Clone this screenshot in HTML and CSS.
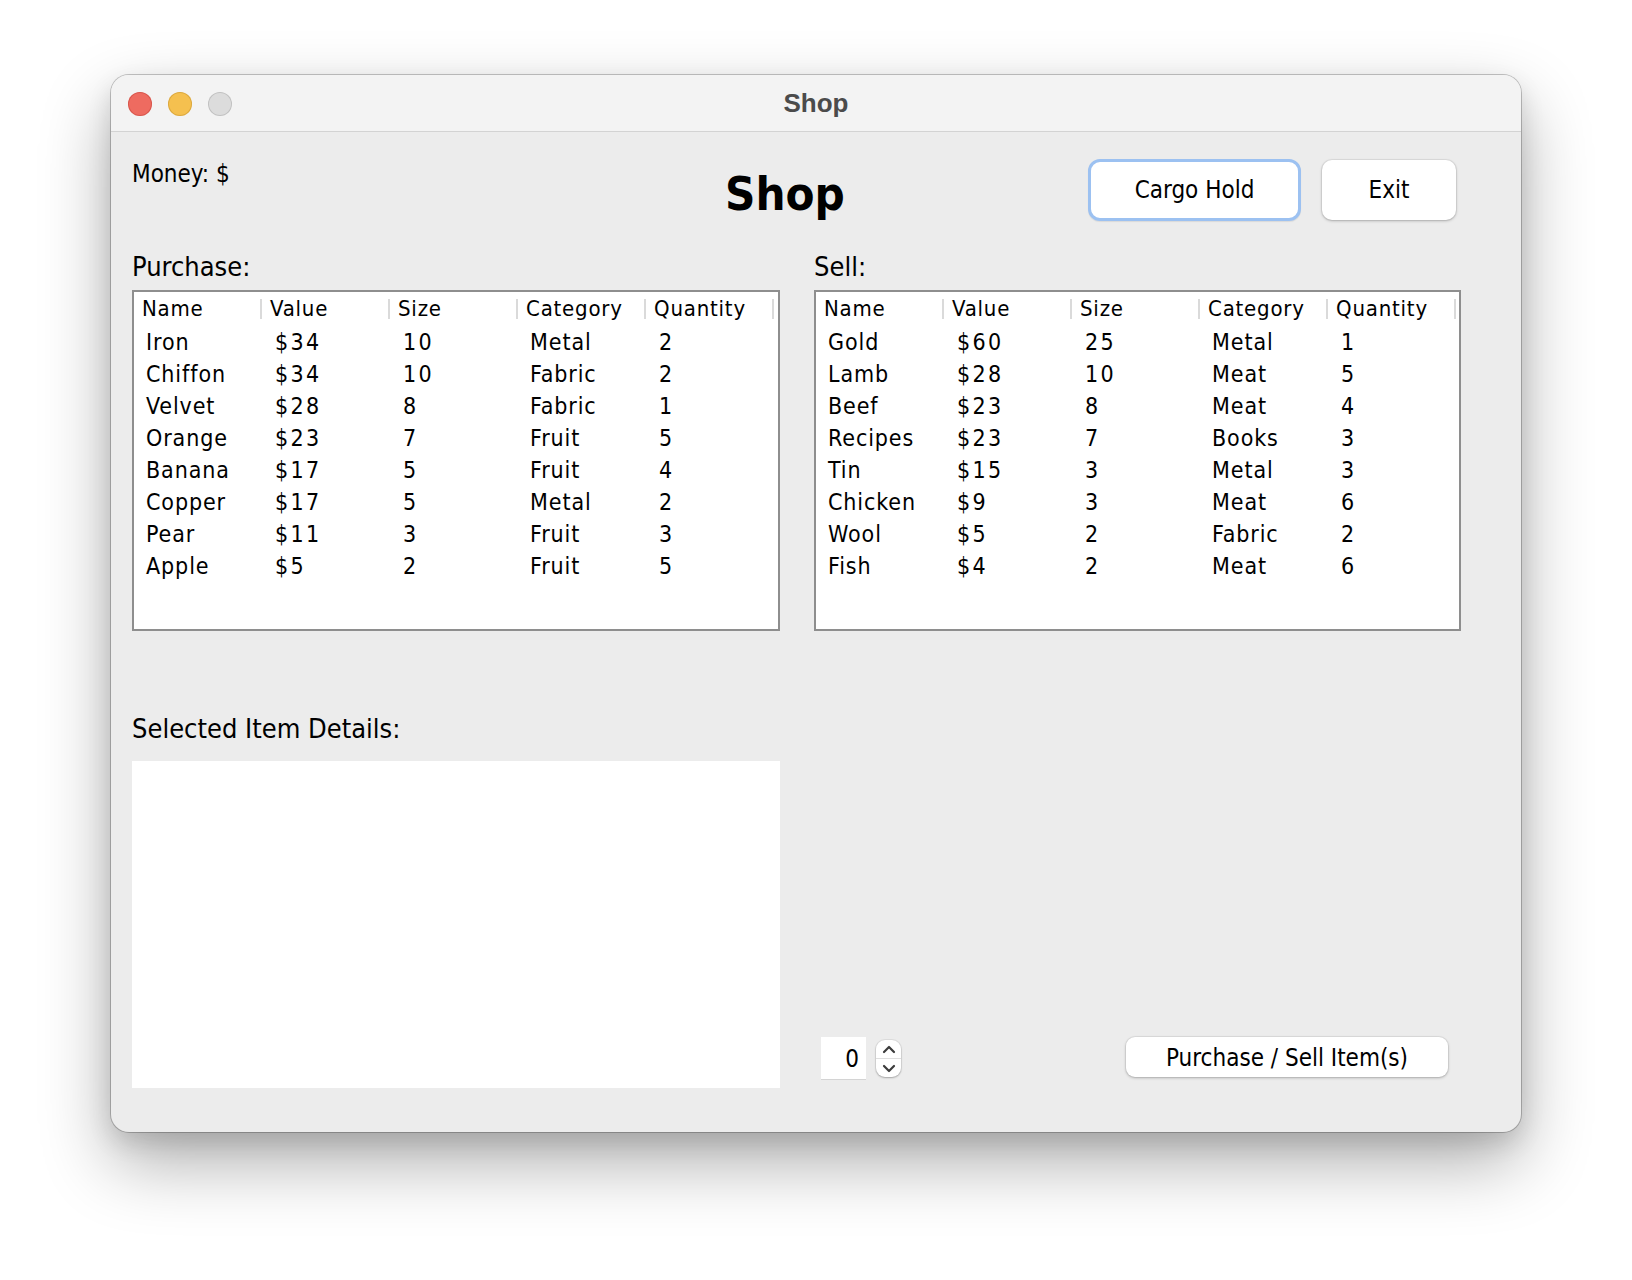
FILE: index.html
```html
<!DOCTYPE html>
<html lang="en">
<head>
<meta charset="utf-8">
<title>Shop</title>
<link rel="stylesheet" href="styles.css">
</head>
<body>
<div class="window">
  <div class="titlebar">
    <div class="lights">
      <span class="light red"></span>
      <span class="light yellow"></span>
      <span class="light gray"></span>
    </div>
    <div class="title">Shop</div>
    <div></div>
  </div>
  <div class="content">
    <div class="top">
      <div class="money">Money: $</div>
      <h1 class="heading">Shop</h1>
      <div class="actions">
        <button class="btn btn-focus">Cargo Hold</button>
        <button class="btn btn-exit">Exit</button>
      </div>
    </div>

    <div class="tables">
      <section class="panel">
        <div class="label">Purchase:</div>
        <div class="table">
          <div class="thead">
            <div class="th"><span class="th-text">Name</span><span class="sep"></span></div>
            <div class="th"><span class="th-text">Value</span><span class="sep"></span></div>
            <div class="th"><span class="th-text">Size</span><span class="sep"></span></div>
            <div class="th"><span class="th-text">Category</span><span class="sep"></span></div>
            <div class="th"><span class="th-text">Quantity</span><span class="sep"></span></div>
          </div>
          <div class="tbody">
            <div class="tr"><span>Iron</span><span class="num">$34</span><span class="num">10</span><span>Metal</span><span class="num">2</span></div>
            <div class="tr"><span>Chiffon</span><span class="num">$34</span><span class="num">10</span><span>Fabric</span><span class="num">2</span></div>
            <div class="tr"><span>Velvet</span><span class="num">$28</span><span class="num">8</span><span>Fabric</span><span class="num">1</span></div>
            <div class="tr"><span>Orange</span><span class="num">$23</span><span class="num">7</span><span>Fruit</span><span class="num">5</span></div>
            <div class="tr"><span>Banana</span><span class="num">$17</span><span class="num">5</span><span>Fruit</span><span class="num">4</span></div>
            <div class="tr"><span>Copper</span><span class="num">$17</span><span class="num">5</span><span>Metal</span><span class="num">2</span></div>
            <div class="tr"><span>Pear</span><span class="num">$11</span><span class="num">3</span><span>Fruit</span><span class="num">3</span></div>
            <div class="tr"><span>Apple</span><span class="num">$5</span><span class="num">2</span><span>Fruit</span><span class="num">5</span></div>
          </div>
        </div>
      </section>
      <section class="panel">
        <div class="label">Sell:</div>
        <div class="table">
          <div class="thead">
            <div class="th"><span class="th-text">Name</span><span class="sep"></span></div>
            <div class="th"><span class="th-text">Value</span><span class="sep"></span></div>
            <div class="th"><span class="th-text">Size</span><span class="sep"></span></div>
            <div class="th"><span class="th-text">Category</span><span class="sep"></span></div>
            <div class="th"><span class="th-text">Quantity</span><span class="sep"></span></div>
          </div>
          <div class="tbody">
            <div class="tr"><span>Gold</span><span class="num">$60</span><span class="num">25</span><span>Metal</span><span class="num">1</span></div>
            <div class="tr"><span>Lamb</span><span class="num">$28</span><span class="num">10</span><span>Meat</span><span class="num">5</span></div>
            <div class="tr"><span>Beef</span><span class="num">$23</span><span class="num">8</span><span>Meat</span><span class="num">4</span></div>
            <div class="tr"><span>Recipes</span><span class="num">$23</span><span class="num">7</span><span>Books</span><span class="num">3</span></div>
            <div class="tr"><span>Tin</span><span class="num">$15</span><span class="num">3</span><span>Metal</span><span class="num">3</span></div>
            <div class="tr"><span>Chicken</span><span class="num">$9</span><span class="num">3</span><span>Meat</span><span class="num">6</span></div>
            <div class="tr"><span>Wool</span><span class="num">$5</span><span class="num">2</span><span>Fabric</span><span class="num">2</span></div>
            <div class="tr"><span>Fish</span><span class="num">$4</span><span class="num">2</span><span>Meat</span><span class="num">6</span></div>
          </div>
        </div>
      </section>
    </div>

    <div class="lower">
      <section class="panel">
        <div class="label">Selected Item Details:</div>
        <div class="details"></div>
      </section>
      <div class="controls">
        <div class="spinner-field">0</div>
        <div class="spinner-arrows">
          <span class="arrow">
            <svg width="14" height="9" viewBox="0 0 14 9"><path d="M2 7 L7 2 L12 7" fill="none" stroke="#3c3c3c" stroke-width="2.2" stroke-linecap="round" stroke-linejoin="round"/></svg>
          </span>
          <span class="arrow arrow-down">
            <svg width="14" height="9" viewBox="0 0 14 9"><path d="M2 2 L7 7 L12 2" fill="none" stroke="#3c3c3c" stroke-width="2.2" stroke-linecap="round" stroke-linejoin="round"/></svg>
          </span>
        </div>
        <button class="btn btn-action">Purchase / Sell Item(s)</button>
      </div>
    </div>
  </div>
</div>
</body>
</html>
```

FILE: styles.css
```css
* {
  box-sizing: border-box;
}

html, body {
  margin: 0;
  padding: 0;
  background: #ffffff;
}

body {
  width: 1632px;
  height: 1280px;
  padding-top: 75px;
  padding-left: 111px;
  font-family: "DejaVu Sans Condensed", "DejaVu Sans", sans-serif;
  font-stretch: semi-condensed;
  color: #000;
}

.window {
  width: 1410px;
  height: 1057px;
  border-radius: 18px;
  background: #ececec;
  overflow: hidden;
  box-shadow: 0 0 0 1px rgba(0, 0, 0, 0.22), 0 30px 70px rgba(0, 0, 0, 0.32), 0 10px 24px rgba(0, 0, 0, 0.12);
}

.titlebar {
  height: 57px;
  background: #f3f3f3;
  border-bottom: 1px solid #d3d3d3;
  display: grid;
  grid-template-columns: 1fr auto 1fr;
  align-items: center;
}

.lights {
  display: flex;
  gap: 16px;
  padding-left: 17px;
  padding-top: 1px;
}

.light {
  width: 24px;
  height: 24px;
  border-radius: 50%;
  display: block;
}

.light.red {
  background: #ee6b60;
  box-shadow: inset 0 0 0 1px rgba(190, 60, 50, 0.45);
}

.light.yellow {
  background: #f5c04f;
  box-shadow: inset 0 0 0 1px rgba(190, 140, 40, 0.45);
}

.light.gray {
  background: #dcdcdc;
  box-shadow: inset 0 0 0 1px rgba(0, 0, 0, 0.12);
}

.title {
  font-family: "Liberation Sans", Arial, sans-serif;
  font-stretch: normal;
  font-weight: 700;
  font-size: 26px;
  line-height: 56px;
  color: #4b4b4b;
}

.content {
  padding: 26px 0 0 21px;
}

/* top row */
.top {
  display: flex;
  align-items: flex-start;
  height: 65px;
}

.money {
  width: 593px;
  margin-top: 1px;
  font-size: 24px;
  line-height: 30px;
}

.heading {
  margin: 8px 0 0 0;
  font-size: 47px;
  line-height: 56px;
  font-weight: 700;
}

.actions {
  margin-left: auto;
  margin-right: 65px;
  display: flex;
  align-items: flex-start;
  gap: 21px;
}

.btn {
  font-family: inherit;
  font-stretch: inherit;
  font-size: 24px;
  color: #000;
  background: #ffffff;
  border: none;
  padding: 0;
  cursor: default;
}

.btn-focus {
  margin-top: 1px;
  width: 213px;
  height: 62px;
  border: 3px solid #9cc1f1;
  border-radius: 12px;
  box-shadow: 0 1px 1px rgba(0, 0, 0, 0.08);
}

.btn-exit {
  margin-top: 2px;
  width: 134px;
  height: 60px;
  border-radius: 10px;
  box-shadow: 0 0 0 1px rgba(0, 0, 0, 0.05), 0 1px 3px rgba(0, 0, 0, 0.25);
}

/* tables */
.tables {
  margin-top: 29px;
  display: grid;
  grid-template-columns: 648px 647px;
  gap: 34px;
}

.label {
  font-size: 27px;
  line-height: 30px;
}

.table {
  margin-top: 8px;
  height: 341px;
  background: #ffffff;
  border: 2px solid #8e8e8e;
}

.thead {
  display: grid;
  grid-template-columns: repeat(5, 128px);
  height: 30px;
  margin-top: 2px;
  align-items: center;
}

.th {
  display: flex;
  align-items: center;
  height: 30px;
  padding-left: 8px;
}

.th-text {
  flex: 1;
  font-size: 22px;
  letter-spacing: 0.8px;
  line-height: 30px;
}

.sep {
  width: 2px;
  height: 20px;
  background: #dadada;
}

.tbody {
  padding-top: 2px;
}

.tr {
  display: grid;
  grid-template-columns: repeat(5, 128px);
  height: 32px;
  font-size: 23px;
  letter-spacing: 0.9px;
  line-height: 32px;
}

.tr span {
  padding-left: 12px;
  white-space: nowrap;
}

.tr .num {
  padding-left: 13px;
  letter-spacing: 2.4px;
}

/* lower area */
.lower {
  margin-top: 83px;
  display: grid;
  grid-template-columns: 648px 647px;
  gap: 34px;
}

.details {
  margin-top: 17px;
  height: 327px;
  background: #ffffff;
}

.controls {
  display: flex;
  align-items: flex-start;
  align-self: end;
  padding-bottom: 8px;
  padding-left: 7px;
  padding-right: 13px;
}

.spinner-field {
  width: 45px;
  height: 43px;
  background: #ffffff;
  border-bottom: 1px solid #d4d4d4;
  font-size: 24px;
  line-height: 44px;
  text-align: right;
  padding-right: 7px;
}

.spinner-arrows {
  margin-left: 10px;
  margin-top: 3px;
  width: 25px;
  height: 37px;
  background: #ffffff;
  border-radius: 9px;
  box-shadow: 0 0 0 1px rgba(0, 0, 0, 0.06), 0 1px 2px rgba(0, 0, 0, 0.25);
  display: flex;
  flex-direction: column;
}

.arrow {
  flex: 1;
  display: flex;
  align-items: center;
  justify-content: center;
}

.arrow-down {
  border-top: 1px solid #dedede;
}

.btn-action {
  margin-left: auto;
  width: 322px;
  height: 40px;
  padding-top: 1px;
  border-radius: 9px;
  box-shadow: 0 0 0 1px rgba(0, 0, 0, 0.05), 0 1px 3px rgba(0, 0, 0, 0.25);
}
```
